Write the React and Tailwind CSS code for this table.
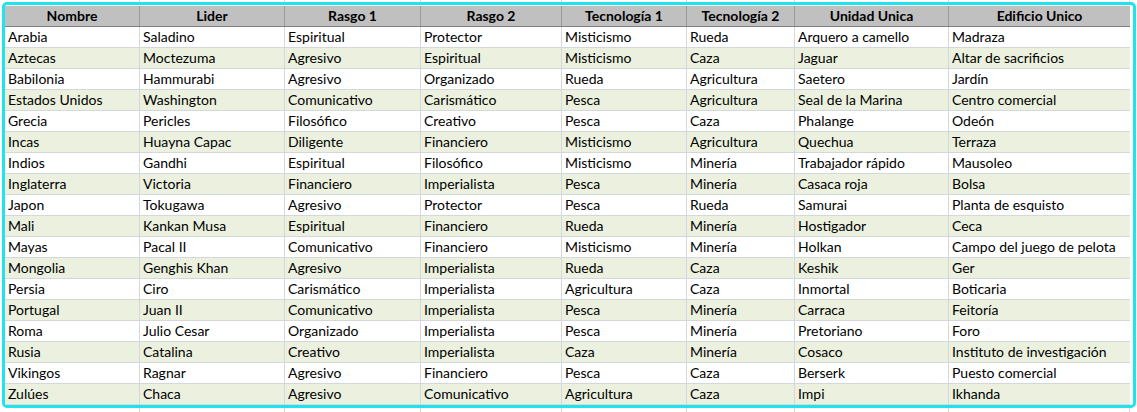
import React from 'react';

const headers = ['Nombre', 'Lider', 'Rasgo 1', 'Rasgo 2', 'Tecnología 1', 'Tecnología 2', 'Unidad Unica', 'Edificio Unico'];

const rows = [
  ['Arabia', 'Saladino', 'Espiritual', 'Protector', 'Misticismo', 'Rueda', 'Arquero a camello', 'Madraza'],
  ['Aztecas', 'Moctezuma', 'Agresivo', 'Espiritual', 'Misticismo', 'Caza', 'Jaguar', 'Altar de sacrificios'],
  ['Babilonia', 'Hammurabi', 'Agresivo', 'Organizado', 'Rueda', 'Agricultura', 'Saetero', 'Jardín'],
  ['Estados Unidos', 'Washington', 'Comunicativo', 'Carismático', 'Pesca', 'Agricultura', 'Seal de la Marina', 'Centro comercial'],
  ['Grecia', 'Pericles', 'Filosófico', 'Creativo', 'Pesca', 'Caza', 'Phalange', 'Odeón'],
  ['Incas', 'Huayna Capac', 'Diligente', 'Financiero', 'Misticismo', 'Agricultura', 'Quechua', 'Terraza'],
  ['Indios', 'Gandhi', 'Espiritual', 'Filosófico', 'Misticismo', 'Minería', 'Trabajador rápido', 'Mausoleo'],
  ['Inglaterra', 'Victoria', 'Financiero', 'Imperialista', 'Pesca', 'Minería', 'Casaca roja', 'Bolsa'],
  ['Japon', 'Tokugawa', 'Agresivo', 'Protector', 'Pesca', 'Rueda', 'Samurai', 'Planta de esquisto'],
  ['Mali', 'Kankan Musa', 'Espiritual', 'Financiero', 'Rueda', 'Minería', 'Hostigador', 'Ceca'],
  ['Mayas', 'Pacal II', 'Comunicativo', 'Financiero', 'Misticismo', 'Minería', 'Holkan', 'Campo del juego de pelota'],
  ['Mongolia', 'Genghis Khan', 'Agresivo', 'Imperialista', 'Rueda', 'Caza', 'Keshik', 'Ger'],
  ['Persia', 'Ciro', 'Carismático', 'Imperialista', 'Agricultura', 'Caza', 'Inmortal', 'Boticaria'],
  ['Portugal', 'Juan II', 'Comunicativo', 'Imperialista', 'Pesca', 'Minería', 'Carraca', 'Feitoría'],
  ['Roma', 'Julio Cesar', 'Organizado', 'Imperialista', 'Pesca', 'Minería', 'Pretoriano', 'Foro'],
  ['Rusia', 'Catalina', 'Creativo', 'Imperialista', 'Caza', 'Minería', 'Cosaco', 'Instituto de investigación'],
  ['Vikingos', 'Ragnar', 'Agresivo', 'Financiero', 'Pesca', 'Caza', 'Berserk', 'Puesto comercial'],
  ['Zulúes', 'Chaca', 'Agresivo', 'Comunicativo', 'Agricultura', 'Caza', 'Impi', 'Ikhanda'],
];

const cols = 'grid grid-cols-[135px_145px_136px_141px_125px_108px_154px_181px]';

export default function App() {
  return (
    <div className="w-[1137px] h-[412px] bg-white overflow-hidden font-['Lato',sans-serif] text-[14px] text-black">
      {/* strip of the sheet above the selection */}
      <div className={`${cols} h-[2px] ml-[5px]`}>
        {headers.map((h) => (
          <div key={h} className="border-r border-[#d4d4d4]" />
        ))}
      </div>

      <div className="ml-[2px] w-[1134px] border-[3px] border-[#1fe4ec] rounded-[5px] pt-[1px] pr-[3px]">
        <div className={`${cols} h-[21px] bg-[#c0c0c0] border-b border-[#7f7f7f] font-bold`}>
          {headers.map((h, i) => (
            <div
              key={h}
              className={`flex items-center justify-center leading-none ${i < 7 ? 'border-r border-[#9a9a9a]' : ''}`}
            >
              {h}
            </div>
          ))}
        </div>

        {rows.map((r, ri) => (
          <div
            key={r[0]}
            className={`${cols} h-[21px] border-b border-[#d4d7dc] ${ri % 2 === 1 ? 'bg-[#ebf1de]' : 'bg-white'}`}
          >
            {r.map((c, ci) => (
              <div
                key={ci}
                className={`flex items-center pl-[3px] leading-none whitespace-nowrap ${ci < 7 ? 'border-r border-[#d4d7dc]' : ''}`}
              >
                {c}
              </div>
            ))}
          </div>
        ))}
      </div>

      <div className={`${cols} h-[4px] ml-[5px]`}>
        {headers.map((h) => (
          <div key={h} className="border-r border-[#d4d4d4]" />
        ))}
      </div>
    </div>
  );
}
